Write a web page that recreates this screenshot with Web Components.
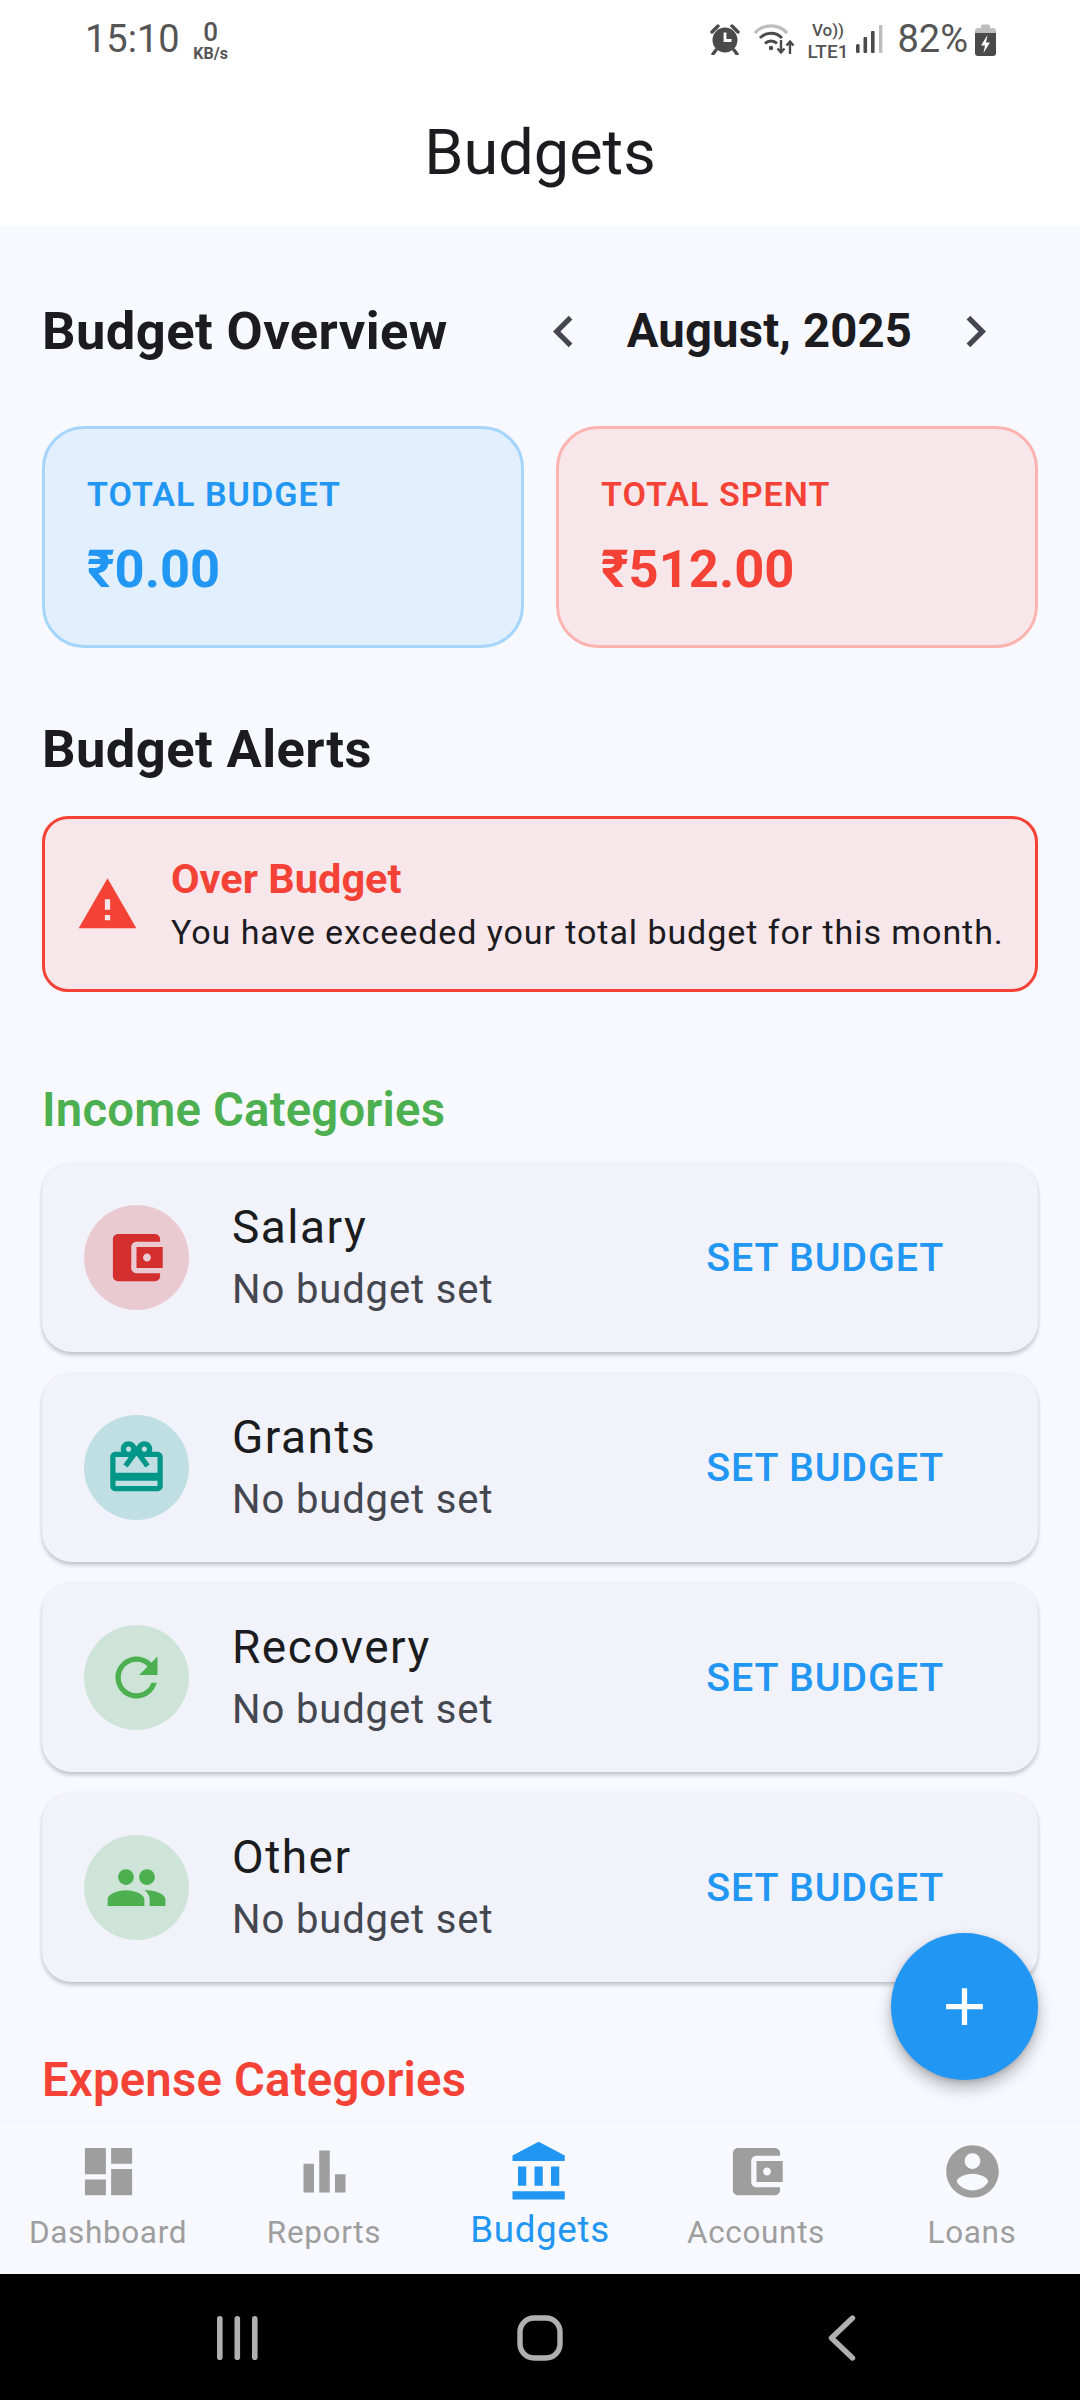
<!DOCTYPE html>
<html>
<head>
<meta charset="utf-8">
<title>Budgets</title>
<style>
  html, body { margin: 0; padding: 0; }
  body { font-family: Roboto, "Noto Sans", sans-serif; background: #000; }
</style>
</head>
<body>
<budgets-screen>
  <status-bar slot="status"></status-bar>
  <app-bar slot="appbar">Budgets</app-bar>

  <overview-header month="August, 2025">Budget Overview</overview-header>
  <div class="stats" style="display:flex;gap:32px;margin-top:32px">
    <stat-card tone="blue" label="TOTAL BUDGET" amount="₹0.00"></stat-card>
    <stat-card tone="red" label="TOTAL SPENT" amount="₹512.00"></stat-card>
  </div>

  <section-title style="margin-top:71px">Budget Alerts</section-title>
  <alert-card style="margin-top:37px" heading="Over Budget">You have exceeded your total budget for this month.</alert-card>

  <section-title small color="#4CAF50" style="margin-top:88px">Income Categories</section-title>
  <div style="display:flex;flex-direction:column;gap:20px;margin-top:22px">
    <category-row name="Salary" icon="wallet" color="#D32F2F"></category-row>
    <category-row name="Grants" icon="gift" color="#009688"></category-row>
    <category-row name="Recovery" icon="refresh" color="#4CAF50"></category-row>
    <category-row name="Other" icon="people" color="#4CAF50"></category-row>
  </div>
  <section-title small color="#F44336" style="margin-top:68px">Expense Categories</section-title>

  <add-fab slot="fab"></add-fab>

  <bottom-nav slot="nav">
    <nav-item icon="dashboard" label="Dashboard"></nav-item>
    <nav-item icon="chart" label="Reports"></nav-item>
    <nav-item icon="bank" label="Budgets" active></nav-item>
    <nav-item icon="wallet" label="Accounts"></nav-item>
    <nav-item icon="person" label="Loans"></nav-item>
  </bottom-nav>
  <system-nav slot="system"></system-nav>
</budgets-screen>

<script>
// material icon paths, 24x24 box
const ICONS = {
  wallet: "M21 18v1c0 1.1-.9 2-2 2H5c-1.11 0-2-.9-2-2V5c0-1.1.89-2 2-2h14c1.1 0 2 .9 2 2v1h-9c-1.11 0-2 .9-2 2v8c0 1.1.89 2 2 2h9zm-9-2h10V8H12v8zm4-2.5c-.83 0-1.5-.67-1.5-1.5s.67-1.5 1.5-1.5 1.5.67 1.5 1.5-.67 1.5-1.5 1.5z",
  gift: "M20 6h-2.18c.11-.31.18-.65.18-1 0-1.66-1.34-3-3-3-1.05 0-1.96.54-2.5 1.35l-.5.67-.5-.68C10.96 2.54 10.05 2 9 2 7.34 2 6 3.34 6 5c0 .35.07.69.18 1H4c-1.11 0-1.99.89-1.99 2L2 19c0 1.11.89 2 2 2h16c1.11 0 2-.89 2-2V8c0-1.11-.89-2-2-2zm-5-2c.55 0 1 .45 1 1s-.45 1-1 1-1-.45-1-1 .45-1 1-1zM9 4c.55 0 1 .45 1 1s-.45 1-1 1-1-.45-1-1 .45-1 1-1zm11 15H4v-2h16v2zm0-5H4V8h5.08L7 10.83 8.62 12 11 8.76l1-1.36 1 1.36L15.38 12 17 10.83 14.92 8H20v6z",
  refresh: "M17.65 6.35C16.2 4.9 14.21 4 12 4c-4.42 0-7.99 3.58-7.99 8s3.57 8 7.99 8c3.73 0 6.84-2.55 7.73-6h-2.08c-.82 2.33-3.04 4-5.65 4-3.31 0-6-2.69-6-6s2.69-6 6-6c1.66 0 3.14.69 4.22 1.78L13 11h7V4l-2.35 2.35z",
  people: "M16 11c1.66 0 2.99-1.34 2.99-3S17.66 5 16 5c-1.66 0-3 1.34-3 3s1.34 3 3 3zm-8 0c1.66 0 2.99-1.34 2.99-3S9.66 5 8 5C6.34 5 5 6.34 5 8s1.34 3 3 3zm0 2c-2.33 0-7 1.17-7 3.5V19h14v-2.5c0-2.33-4.67-3.5-7-3.5zm8 0c-.29 0-.62.02-.97.05 1.16.84 1.97 1.97 1.97 3.45V19h6v-2.5c0-2.33-4.67-3.5-7-3.5z",
  dashboard: "M3 13h8V3H3v10zm0 8h8v-6H3v6zm10 0h8V11h-8v10zm0-18v6h8V3h-8z",
  chart: "M4 9h4v11H4zm12 4h4v7h-4zm-6-9h4v16h-4z",
  bank: "M4 10v7h3v-7H4zm6 0v7h3v-7h-3zM2 22h19v-3H2v3zm14-12v7h3v-7h-3zm-4.5-9L2 6v2h19V6l-9.5-5z",
  person: "M12 2C6.48 2 2 6.48 2 12s4.48 10 10 10 10-4.48 10-10S17.52 2 12 2zm0 3c1.66 0 3 1.34 3 3s-1.34 3-3 3-3-1.34-3-3 1.34-3 3-3zm0 14.2c-2.5 0-4.71-1.28-6-3.22.03-1.99 4-3.08 6-3.08 1.99 0 5.97 1.09 6 3.08-1.29 1.94-3.5 3.22-6 3.22z",
  warning: "M1 21h22L12 2 1 21zm12-3h-2v-2h2v2zm0-4h-2v-4h2v4z",
  left: "M15.41 7.41L14 6l-6 6 6 6 1.41-1.41L10.83 12z",
  right: "M10 6L8.59 7.41 13.17 12l-4.58 4.59L10 18l6-6z",
  add: "M19 13h-6v6h-2v-6H5v-2h6V5h2v6h6v2z"
};

function svgIcon(name, size, color) {
  return `<svg width="${size}" height="${size}" viewBox="0 0 24 24" fill="${color}" style="display:block;flex:none"><path d="${ICONS[name]}"/></svg>`;
}

class BudgetsScreen extends HTMLElement {
  constructor() {
    super();
    this.shadow = this.attachShadow({ mode: "open" });
    this.shadow.innerHTML = `
    <style>
      :host { display: flex; flex-direction: column; position: relative; width: 1080px; height: 2400px; overflow: hidden; background: #F8F9FF; }
      .main { flex: 1; min-height: 0; overflow: hidden; padding: 42px 42px 0; box-sizing: border-box; }
      .fab { position: absolute; left: 891px; top: 1933px; }
    </style>
    <slot name="status"></slot>
    <slot name="appbar"></slot>
    <div class="main"><slot></slot></div>
    <slot name="nav"></slot>
    <slot name="system"></slot>
    <div class="fab"><slot name="fab"></slot></div>`;
  }
}

class StatusBar extends HTMLElement {
  constructor() {
    super();
    this.shadow = this.attachShadow({ mode: "open" });
    this.shadow.innerHTML = `
    <style>
      :host { display: flex; align-items: center; height: 76px; background: #fff; padding: 2px 84px 0 85px; color: #555; box-sizing: border-box; }
      .time { font-size: 38px; line-height: 74px; }
      .speed { display: flex; flex-direction: column; align-items: center; margin: 2px 0 0 12px; width: 38px; }
      .speed b { font-size: 26px; line-height: 24px; font-weight: 500; }
      .speed span { font-size: 16px; line-height: 14px; margin-top: 3px; font-weight: 700; }
      .right { margin-left: auto; display: flex; align-items: center; }
      .lte { display: flex; flex-direction: column; align-items: center; font-weight: 500; margin: 4px 0 0 10px; width: 43px; }
      .lte i { font-style: normal; font-size: 17px; line-height: 20px; }
      .lte span { font-size: 19px; line-height: 23px; }
      .pct { font-size: 38px; margin-left: 14px; }
    </style>
    <div class="time">15:10</div>
    <div class="speed"><b>0</b><span>KB/s</span></div>
    <div class="right">
      <svg width="32" height="32" viewBox="0 0 30 32" fill="#4a4a4a" style="display:block">
        <circle cx="15" cy="17" r="12.5"/>
        <path d="M2 9l6-6M28 9l-6-6M6 27l-3 4M24 27l3 4" stroke="#4a4a4a" stroke-width="3.4" stroke-linecap="round"/>
        <path d="M15 9.5v8h6.5" stroke="#fff" stroke-width="2.8" fill="none"/>
      </svg>
      <svg width="42" height="32" viewBox="0 0 42 32" fill="none" style="display:block;margin-left:13px">
        <path d="M1 10C9 .5 25 .5 33 10" stroke="#bdbdbd" stroke-width="3.2"/>
        <path d="M6 15c6-6.500 16-6.500 22 0M11 20.500c3.500-3.500 8.500-3.500 12 0" stroke="#4a4a4a" stroke-width="3"/>
        <circle cx="17" cy="25" r="2.200" fill="#4a4a4a"/>
        <path d="M27 17v12M23.500 25.500l3.500 4 3.500-4M36 31V19M32.500 22.500l3.500-4 3.500 4" stroke="#4a4a4a" stroke-width="2.400"/>
      </svg>
      <div class="lte"><i>Vo))</i><span>LTE1</span></div>
      <svg width="27" height="30" viewBox="0 0 27 30" style="display:block;margin-left:7px">
        <rect x="0" y="20" width="3.600" height="9" rx="1.500" fill="#4a4a4a"/>
        <rect x="7.500" y="13" width="3.600" height="16" rx="1" fill="#4a4a4a"/>
        <rect x="15" y="7" width="3.600" height="22" rx="1" fill="#4a4a4a"/>
        <rect x="23" y="1" width="3.400" height="28" rx="1" fill="#bdbdbd"/>
      </svg>
      <div class="pct">82%</div>
      <svg width="21" height="33" viewBox="0 0 21 33" style="display:block;margin-left:7px">
        <path d="M6 3a1.500 1.500 0 0 1 1.500-1.500h6A1.500 1.500 0 0 1 15 3v2h3a3 3 0 0 1 3 3v6H0V8a3 3 0 0 1 3-3h3z" fill="#bdbdbd"/>
        <path d="M0 10h21v20a3 3 0 0 1-3 3H3a3 3 0 0 1-3-3z" fill="#4a4a4a"/>
        <path d="M12.500 12L6 22.500h4L8.500 30 15 19.500h-4z" fill="#fff"/>
      </svg>
    </div>`;
  }
}

class AppBar extends HTMLElement {
  constructor() {
    super();
    this.shadow = this.attachShadow({ mode: "open" });
    this.shadow.innerHTML = `
    <style>
      :host { display: flex; align-items: center; justify-content: center; height: 150px; padding-top: 2px; box-sizing: border-box; background: #fff; color: #1C1B1F; font-size: 63px; }
    </style>
    <slot></slot>`;
  }
}

class OverviewHeader extends HTMLElement {
  constructor() {
    super();
    this.shadow = this.attachShadow({ mode: "open" });
    this.shadow.innerHTML = `
    <style>
      :host { display: flex; align-items: center; justify-content: space-between; height: 126px; color: #1C1B1F; }
      .title { font-size: 52.5px; font-weight: 700; letter-spacing: .42px; }
      .picker { display: flex; align-items: center; }
      .btn { width: 126px; height: 126px; display: flex; align-items: center; justify-content: center; }
      .month { font-size: 47.25px; font-weight: 700; letter-spacing: .15px; }
    </style>
    <div class="title"><slot></slot></div>
    <div class="picker">
      <div class="btn">${svgIcon("left", 63, "#44474F")}</div>
      <div class="month">${this.getAttribute("month")}</div>
      <div class="btn">${svgIcon("right", 63, "#44474F")}</div>
    </div>`;
  }
}

class StatCard extends HTMLElement {
  constructor() {
    super();
    this.shadow = this.attachShadow({ mode: "open" });
    const blue = this.getAttribute("tone") === "blue";
    this.shadow.innerHTML = `
    <style>
      :host { display: block; flex: 1; height: 222px; box-sizing: border-box; padding: 43px 42px 0; border-radius: 42px; border: 3px solid ${blue ? "#A6D5FB" : "#FBB4AF"}; background: ${blue ? "#E1EFFE" : "#F8E7EA"}; color: ${blue ? "#2196F3" : "#F44336"}; }
      .label { font-size: 34.1px; font-weight: 600; line-height: 44px; letter-spacing: 1px; }
      .amount { font-size: 52.5px; font-weight: 700; line-height: 62px; margin-top: 22px; }
    </style>
    <div class="label">${this.getAttribute("label")}</div>
    <div class="amount">${this.getAttribute("amount")}</div>`;
  }
}

class SectionTitle extends HTMLElement {
  constructor() {
    super();
    this.shadow = this.attachShadow({ mode: "open" });
    const small = this.hasAttribute("small");
    this.shadow.innerHTML = `
    <style>
      :host { display: block; line-height: 60px; color: ${this.getAttribute("color") || "#1C1B1F"}; font-size: ${small ? "47.25px" : "52.5px"}; font-weight: ${small ? 600 : 700}; letter-spacing: ${small ? ".2px" : ".42px"}; }
    </style>
    <slot></slot>`;
  }
}

class AlertCard extends HTMLElement {
  constructor() {
    super();
    this.shadow = this.attachShadow({ mode: "open" });
    this.shadow.innerHTML = `
    <style>
      :host { display: flex; align-items: center; height: 176px; box-sizing: border-box; padding-left: 31px; gap: 32px; border: 3px solid #F44336; border-radius: 26px; background: #F8E7EA; }
      .head { color: #F44336; font-size: 41.5px; font-weight: 700; line-height: 50px; }
      .msg { color: #1C1B1F; font-size: 34.1px; line-height: 50px; margin-top: 3px; letter-spacing: .9px; white-space: nowrap; }
    </style>
    ${svgIcon("warning", 63, "#F44336")}
    <div style="padding-top:3px">
      <div class="head">${this.getAttribute("heading")}</div>
      <div class="msg"><slot></slot></div>
    </div>`;
  }
}

class CategoryRow extends HTMLElement {
  constructor() {
    super();
    this.shadow = this.attachShadow({ mode: "open" });
    const color = this.getAttribute("color");
    this.shadow.innerHTML = `
    <style>
      :host { display: flex; align-items: center; height: 190px; box-sizing: border-box; padding: 0 94px 0 42px; border-radius: 30px; background: #F1F2FA; box-shadow: 0 3px 4px rgba(0,0,0,.22), 0 0 2px rgba(0,0,0,.03); }
      .disc { width: 105px; height: 105px; border-radius: 50%; display: flex; align-items: center; justify-content: center; position: relative; flex: none; }
      .disc::before { content: ""; position: absolute; inset: 0; border-radius: 50%; background: ${color}; opacity: .2; }
      .disc svg { position: relative; }
      .text { margin-left: 43px; flex: 1; }
      .name { font-size: 46px; line-height: 52px; letter-spacing: 1.5px; color: #1A1C1E; }
      .sub { font-size: 40px; line-height: 48px; letter-spacing: .88px; color: #44474F; margin-top: 13px; }
      .action { color: #2196F3; font-size: 39.4px; font-weight: 500; letter-spacing: .86px; }
    </style>
    <div class="disc">${svgIcon(this.getAttribute("icon"), 63, color)}</div>
    <div class="text">
      <div class="name">${this.getAttribute("name")}</div>
      <div class="sub">No budget set</div>
    </div>
    <div class="action">SET BUDGET</div>`;
  }
}

class AddFab extends HTMLElement {
  constructor() {
    super();
    this.shadow = this.attachShadow({ mode: "open" });
    this.shadow.innerHTML = `
    <style>
      :host { display: flex; align-items: center; justify-content: center; width: 147px; height: 147px; border-radius: 50%; background: #2196F3; box-shadow: 0 8px 16px rgba(0,0,0,.28), 0 2px 5px rgba(0,0,0,.12); }
    </style>
    ${svgIcon("add", 63, "#fff")}`;
  }
}

class BottomNav extends HTMLElement {
  constructor() {
    super();
    this.shadow = this.attachShadow({ mode: "open" });
    this.shadow.innerHTML = `
    <style>
      :host { display: flex; height: 152px; background: #F8F9FF; box-shadow: 0 -1px 3px rgba(0,0,0,.03); position: relative; }
      ::slotted(nav-item) { flex: 1; }
    </style>
    <slot></slot>`;
  }
}

class NavItem extends HTMLElement {
  constructor() {
    super();
    this.shadow = this.attachShadow({ mode: "open" });
    const active = this.hasAttribute("active");
    const color = active ? "#2196F3" : "#9E9E9E";
    this.shadow.innerHTML = `
    <style>
      :host { display: flex; flex-direction: column; align-items: center; padding-top: ${active ? 17 : 18}px; box-sizing: border-box; color: ${color}; }
      .label { font-size: ${active ? "36.75px" : "31.5px"}; line-height: 40px; margin-top: ${active ? 5 : 10}px; letter-spacing: .65px; white-space: nowrap; }
    </style>
    ${svgIcon(this.getAttribute("icon"), active ? 66 : 63, color)}
    <div class="label">${this.getAttribute("label")}</div>`;
  }
}

class SystemNav extends HTMLElement {
  constructor() {
    super();
    this.shadow = this.attachShadow({ mode: "open" });
    this.shadow.innerHTML = `
    <style>
      :host { display: grid; grid-template-columns: repeat(3, 302px); justify-content: center; align-items: center; height: 126px; padding-top: 2px; box-sizing: border-box; background: #000; }
      svg { display: block; justify-self: center; }
    </style>
    <svg width="42" height="44" viewBox="0 0 42 44" fill="#B0B0B0">
      <rect x="0" y="0" width="5.600" height="44" rx="2.800"/>
      <rect x="17.500" y="0" width="5.600" height="44" rx="2.800"/>
      <rect x="35" y="0" width="5.600" height="44" rx="2.800"/>
    </svg>
    <svg width="46" height="46" viewBox="0 0 46 46" fill="none" stroke="#B0B0B0" stroke-width="5.400">
      <rect x="3" y="3" width="40" height="40" rx="14"/>
    </svg>
    <svg width="28" height="46" viewBox="0 0 28 46" fill="none" stroke="#B0B0B0" stroke-width="5.400" stroke-linecap="round" stroke-linejoin="round">
      <path d="M24.500 3L3.500 23l21 20"/>
    </svg>`;
  }
}

customElements.define("budgets-screen", BudgetsScreen);
customElements.define("status-bar", StatusBar);
customElements.define("app-bar", AppBar);
customElements.define("overview-header", OverviewHeader);
customElements.define("stat-card", StatCard);
customElements.define("section-title", SectionTitle);
customElements.define("alert-card", AlertCard);
customElements.define("category-row", CategoryRow);
customElements.define("add-fab", AddFab);
customElements.define("bottom-nav", BottomNav);
customElements.define("nav-item", NavItem);
customElements.define("system-nav", SystemNav);
</script>
</body>
</html>
